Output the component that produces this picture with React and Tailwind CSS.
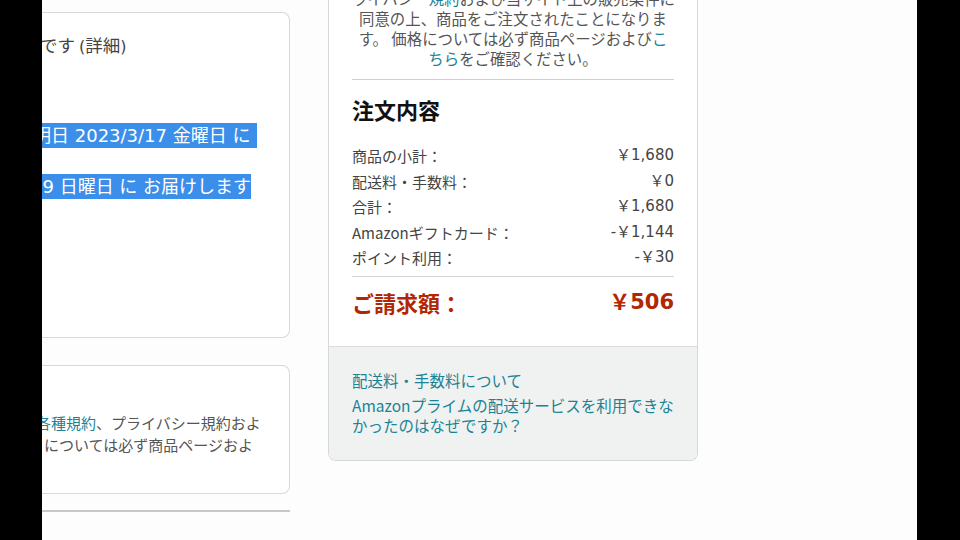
import React from 'react'

const jp = { fontFamily: '"Noto Sans CJK JP", "Noto Sans", sans-serif' }
const mixed = { fontFamily: '"DejaVu Sans", "Noto Sans CJK JP", sans-serif' }

const Row = ({ label, value }) => (
  <div className="flex justify-between text-[15px] leading-[25.5px] text-[#444]">
    <span>{label}</span>
    <span style={mixed}>{value}</span>
  </div>
)

export default function App() {
  return (
    <div className="w-[960px] h-[540px] flex bg-black overflow-hidden" style={jp}>
      <div className="w-[42px] shrink-0 bg-black" />

      <div className="w-[875px] shrink-0 h-full bg-[#fdfdfd] overflow-hidden flex items-start gap-[38px]">
        {/* left column, cut off at the left edge */}
        <div className="w-[248px] shrink-0 flex flex-col">
          <div className="mt-[12px] h-[326px] bg-white border border-l-0 border-[#d5d9d9] rounded-r-lg pt-[20px]">
            <div className="text-[17.5px] leading-[24px] text-[#444] whitespace-nowrap ml-[-2px]">です <span style={mixed} className="text-[16px]">(</span>詳細<span style={mixed} className="text-[16px]">)</span></div>
            <div className="mt-[64px] whitespace-nowrap ml-[-9px]">
              <span style={mixed} className="inline-block bg-[#3b8eea] text-white text-[18px] leading-[25px] pr-[7px]">明日 2023/3/17 金曜日 に</span>
            </div>
            <div className="mt-[26px] whitespace-nowrap ml-[-11px]">
              <span style={mixed} className="inline-block bg-[#3b8eea] text-white text-[18px] leading-[25px]">19 日曜日 に お届けします</span>
            </div>
          </div>

          <div className="mt-[27px] h-[129px] bg-white border border-l-0 border-[#d5d9d9] rounded-r-lg pt-[46px] text-[15px] leading-[22px] text-[#555] whitespace-nowrap">
            <div className="ml-[-6px]"><span className="text-[#1b8394]">各種規約</span>、プライバシー規約およ</div>
            <div className="ml-[2px]">については必ず商品ページおよ</div>
          </div>

          <div className="mt-[16px] h-[2px] bg-[#c8c8c8]" />
        </div>

        {/* right column: order summary */}
        <div className="w-[370px] shrink-0 mt-[-32px] bg-white border border-t-0 border-[#d5d9d9] rounded-b-lg overflow-hidden">
          <div className="px-[23px] pb-[29px]">
            <div className="text-center text-[15.4px] leading-[20px] text-[#555] whitespace-nowrap">
              <div>当サイト上の販売条件に同意の上、商品をご注文</div>
              <div>ライバシー<span className="text-[#1b8394]">規約</span>および当サイト上の販売条件に</div>
              <div>同意の上、商品をご注文されたことになりま</div>
              <div>す。 価格については必ず商品ページおよび<span className="text-[#1b8394]">こ</span></div>
              <div><span className="text-[#1b8394]">ちら</span>をご確認ください。</div>
            </div>
            <div className="mt-[11px] border-t border-[#cfcfcf]" />
            <div className="mt-[15px] text-[22px] leading-[28px] font-bold text-[#111]">注文内容</div>
            <div className="mt-[20px]">
              <Row label="商品の小計：" value="￥1,680" />
              <Row label="配送料・手数料：" value="￥0" />
              <Row label="合計：" value="￥1,680" />
              <Row label="Amazonギフトカード：" value="-￥1,144" />
              <Row label="ポイント利用：" value="-￥30" />
            </div>
            <div className="mt-[5px] border-t border-[#d5d5d5]" />
            <div className="mt-[10px] flex justify-between text-[22px] leading-[30px] font-bold text-[#b12704]">
              <span>ご請求額：</span>
              <span style={mixed} className="text-[21px]">￥506</span>
            </div>
          </div>
          <div className="bg-[#f0f2f2] border-t border-[#dddddd] px-[23px] pt-[23px] pb-[25px] text-[15.5px] leading-[20px] text-[#1b8394]">
            <div>配送料・手数料について</div>
            <div className="mt-[5px]">Amazonプライムの配送サービスを利用できなかったのはなぜですか？</div>
          </div>
        </div>
      </div>

      <div className="flex-1 bg-black" />
    </div>
  )
}
